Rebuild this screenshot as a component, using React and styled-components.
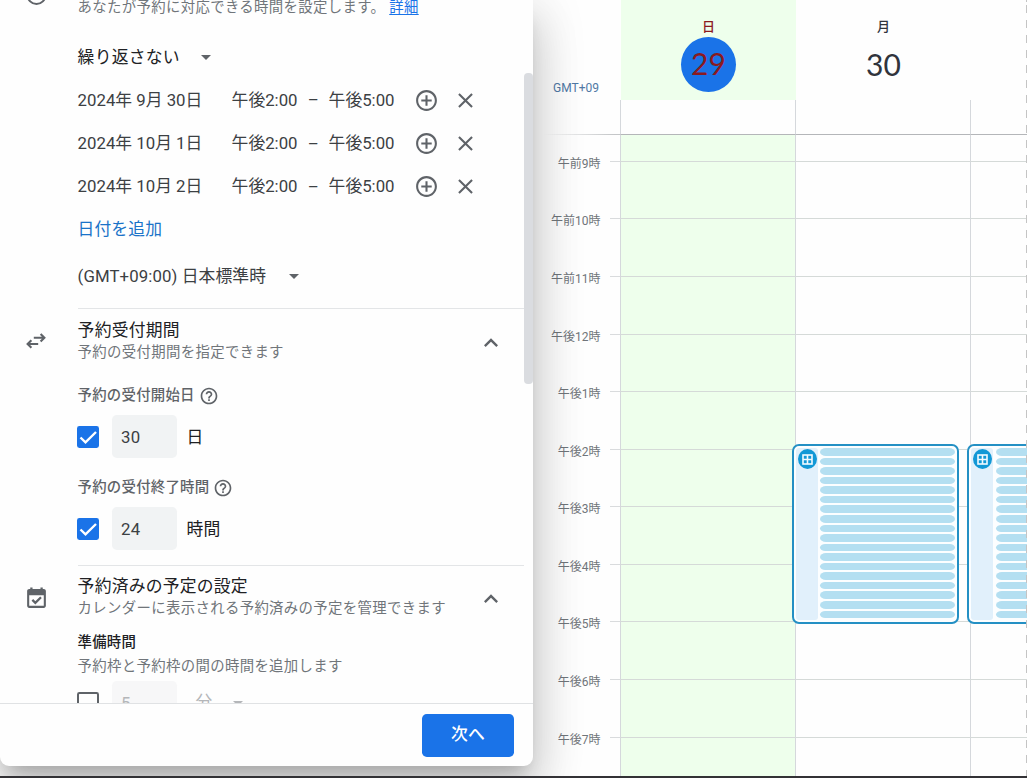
import React from "react";
import styled, { createGlobalStyle, css } from "styled-components";
import {
  MdAddCircleOutline,
  MdArrowDropDown,
  MdClose,
  MdExpandLess,
  MdHelpOutline,
} from "react-icons/md";

const GlobalStyle = createGlobalStyle`
  *, *::before, *::after { box-sizing: border-box; }
  html, body { margin: 0; background: #fff; }
  body {
    font-family: Roboto, "Noto Sans CJK JP", sans-serif;
    color: #3c4043;
    overflow: hidden;
  }
  svg { display: block; flex: none; }
`;

const Screen = styled.div`
  display: flex;
  width: 1027px;
  height: 778px;
  overflow: hidden;
  border-bottom: 2px solid #333236;
  background: #fefefe;
`;

/* ---------- Side panel ---------- */

const Panel = styled.aside`
  position: relative;
  z-index: 2;
  display: flex;
  flex-direction: column;
  flex: none;
  width: 533px;
  height: 766px;
  background: #fefefe;
  border-radius: 0 0 9px 9px;
  box-shadow: 0 29px 46px 4px rgba(0, 0, 0, 0.13),
    0 11px 50px 8px rgba(0, 0, 0, 0.11), 0 13px 18px -8px rgba(0, 0, 0, 0.2);
`;

const PanelBody = styled.div`
  display: flex;
  height: 703px;
  overflow: hidden;
`;

const Sections = styled.div`
  width: 524px;
  height: 703px;
  overflow: hidden;
`;

const ScrollTrack = styled.div`
  width: 9px;
  padding-top: 73px;
`;

const ScrollThumb = styled.div`
  height: 311px;
  border-radius: 4px;
  background: #dadce0;
`;

const Section = styled.section`
  display: grid;
  grid-template-columns: 78px 446px;
`;

const SectionIcon = styled.div`
  display: flex;
  align-items: flex-start;
  padding: ${(p) => p.$top}px 0 0 24px;
  color: #5f6368;
`;

const ClockSlot = styled.div`
  margin-top: -17px;
  padding-left: 24px;
  color: #5f6368;
`;

const SectionContent = styled.div`
  display: flex;
  flex-direction: column;
  text-indent: -0.4px;
  ${(p) =>
    p.$divided &&
    css`
      border-top: 1px solid #e3e5e7;
    `}
`;

const LastContent = styled(SectionContent)`
  margin-top: 15px;
`;

const Hint = styled.p`
  margin: ${(p) => p.$top || 0}px 0 0;
  height: 22px;
  line-height: 22px;
  font-size: 14.4px;
  letter-spacing: 0.34px;
  color: #70757a;
  white-space: nowrap;
`;

const HintLink = styled.a`
  margin-left: 4px;
  color: #1a73e8;
  text-decoration: underline;
  text-underline-offset: 2px;
`;

const Select = styled.div`
  display: flex;
  align-items: center;
  height: ${(p) => p.$height}px;
  margin: ${(p) => p.$top || 0}px 0 ${(p) => p.$bottom || 0}px;
  padding-bottom: 2px;
  gap: ${(p) => p.$gap}px;
  font-size: 16.8px;
  letter-spacing: ${(p) => p.$tracking}px;
  color: ${(p) => (p.$dark ? "#202124" : "#3c4043")};
  svg { margin-top: 2px; color: #5f6368; }
`;

const Slot = styled.div`
  display: grid;
  grid-template-columns: 154px 66px 31px 85px 39px auto;
  align-items: center;
  height: 43.4px;
  font-size: 16.8px;
  color: #3c4043;
  white-space: nowrap;
  svg { margin-top: 1px; color: #5f6368; }
`;

const SlotText = styled.span`
  padding-bottom: 2px;
`;

const Dash = styled.span`
  padding-top: 1px;
  text-align: center;
`;

const AddDate = styled.a`
  height: 43px;
  line-height: 43px;
  font-size: 16.8px;
  letter-spacing: 0.1px;
  color: #1a73c8;
`;

const SectionHead = styled.header`
  display: flex;
  align-items: center;
  justify-content: space-between;
  height: 45px;
  margin-top: ${(p) => p.$top}px;
  padding-right: 19px;
  svg { margin-top: 2px; color: #5f6368; }
`;

const Title = styled.h2`
  margin: 0;
  height: 22px;
  line-height: 22px;
  font-size: 16.8px;
  font-weight: 400;
  letter-spacing: 0.24px;
  color: #202124;
`;

const Label = styled.div`
  display: flex;
  align-items: center;
  gap: 4px;
  height: 22px;
  margin-top: ${(p) => p.$top}px;
  font-size: 14.4px;
  font-weight: 500;
  letter-spacing: 0.24px;
  color: ${(p) => (p.$dark ? "#202124" : "#5f6368")};
  svg { margin-top: 5px; }
`;

const Field = styled.div`
  display: flex;
  align-items: center;
  flex: none;
  height: 43px;
  margin-top: ${(p) => p.$top}px;
  font-size: 16.8px;
  color: ${(p) => (p.$disabled ? "#b4b6b9" : "#202124")};
`;

const Box = styled.span`
  display: flex;
  align-items: center;
  justify-content: center;
  width: 22px;
  height: 22px;
  margin: 0 13px 0 -1px;
  border-radius: 2.4px;
  border: 2px solid ${(p) => (p.$checked ? "#1a73e8" : "#5f6368")};
  background: ${(p) => (p.$checked ? "#1a73e8" : "transparent")};
`;

const NumberInput = styled.span`
  width: 65px;
  height: 43px;
  line-height: 44px;
  padding-left: 9px;
  margin-right: ${(p) => (p.$disabled ? 19 : 10)}px;
  border-radius: 4.8px;
  background: ${(p) => (p.$disabled ? "#f7f7f8" : "#f1f3f4")};
  color: ${(p) => (p.$disabled ? "#b4b6b9" : "#3c4043")};
  letter-spacing: 0.3px;
  text-indent: 0;
`;

const Unit = styled.span`
  padding-bottom: ${(p) => (p.$disabled ? 4 : 2)}px;
`;

const FieldArrow = styled.span`
  margin-left: 14px;
`;

const PanelFooter = styled.footer`
  display: flex;
  justify-content: flex-end;
  height: 63px;
  padding: 10px 19px 0 0;
  border-top: 1px solid #e0e2e4;
`;

const NextButton = styled.button`
  width: 92px;
  height: 43px;
  padding: 0 0 5px;
  border: 0;
  border-radius: 4.8px;
  background: #1a73e8;
  color: #fff;
  font: 500 16.8px Roboto, "Noto Sans CJK JP", sans-serif;
  letter-spacing: 0.3px;
`;

/* ---------- Calendar ---------- */

const columns = "77px 10px 175px 175px 57px";

const Calendar = styled.main`
  position: relative;
  width: 494px;
  height: 776px;
  overflow: hidden;
`;

const DayHeader = styled.div`
  display: grid;
  grid-template-columns: ${columns};
  height: 100px;
`;

const Zone = styled.div`
  grid-column: 1 / 3;
  padding: 80px 21px 0 0;
  text-align: right;
  font-size: 12px;
  line-height: 16px;
  color: #5079a5;
`;

const Day = styled.div`
  display: flex;
  flex-direction: column;
  align-items: center;
  margin-left: 1px;
  margin-right: -1px;
  padding-top: 18px;
  background: ${(p) => (p.$today ? "#eeffec" : "transparent")};
  color: ${(p) => (p.$today ? "#8b1a1f" : "#30343c")};
`;

const Weekday = styled.span`
  height: 19px;
  line-height: 18px;
  font-size: 13px;
  font-weight: 500;
`;

const DayNumber = styled.span`
  width: 55px;
  height: 55px;
  border-radius: 50%;
  background: ${(p) => (p.$today ? "#1a73e8" : "transparent")};
  font-family: Lato, sans-serif;
  font-size: 30px;
  line-height: ${(p) => (p.$today ? 53 : 55)}px;
  text-align: center;
`;

const AllDay = styled.div`
  display: grid;
  grid-template-columns: ${columns};
  height: 35px;
`;

const Cell = styled.div`
  border-left: 1px solid #d5d8dc;
  background: ${(p) => (p.$today ? "#eeffec" : "transparent")};
`;

const AllDayCell = styled(Cell)`
  border-bottom: 1px solid #b4b6b9;
`;

const AllDayGutter = styled.div`
  grid-column: 1 / 3;
  border-bottom: 1px solid;
  border-image: linear-gradient(90deg, transparent 12px, #c4c6c8 80px) 1;
`;

const HourRow = styled.div`
  display: grid;
  grid-template-columns: ${columns};
  height: ${(p) => p.$height}px;
`;

const Line = styled.div`
  border-bottom: 1px solid #d9dbdd;
`;

const LineCell = styled(Cell)`
  border-bottom: 1px solid #d5dad8;
`;

const HourLabel = styled.div`
  display: flex;
  align-items: flex-end;
  justify-content: flex-end;
  padding-right: 9.5px;
  margin-bottom: -10px;
  font-size: 12px;
  line-height: 16px;
  color: #70757a;
  white-space: nowrap;
`;

const DashedEdge = styled.div`
  position: absolute;
  top: 0;
  right: 0;
  width: 1px;
  height: 776px;
  background: repeating-linear-gradient(#c4c4c4 0 8px, transparent 8px 15px);
  background-position: 0 5px;
`;

const Appointment = styled.div`
  position: absolute;
  top: 444px;
  left: ${(p) => p.$left}px;
  display: flex;
  gap: ${(p) => p.$gap}px;
  width: 167px;
  height: 180px;
  padding: 2px;
  border: 2px solid #2490c4;
  border-radius: 7px;
  background: #fcfeff;
`;

const AppointmentRail = styled.div`
  display: flex;
  justify-content: center;
  width: 22px;
  height: 172px;
  padding-top: 1px;
  border-radius: 3px;
  background: #e1f0fb;
`;

const Badge = styled.span`
  display: flex;
  align-items: center;
  justify-content: center;
  flex: none;
  width: 19px;
  height: 20px;
  border-radius: 50%;
  background: #1298d6;
`;

const Slots = styled.div`
  display: flex;
  flex-direction: column;
  gap: 2px;
  flex: 1;
`;

const SlotBar = styled.div`
  flex: none;
  height: 7.57px;
  border-radius: 6px / 4px;
  background: #b4dff1;
`;

const SwapIcon = () => (
  <svg width="24" height="24" viewBox="0 0 24 24" fill="none" stroke="currentColor" strokeWidth="2.1">
    <path d="M9.800 8.800H20M16.600 5l3.800 3.800-3.800 3.800M14.200 15H4M7.400 11.200L3.600 15l3.800 3.800" />
  </svg>
);

const CalendarCheckIcon = () => (
  <svg width="25" height="25" viewBox="0 0 24 24" fill="currentColor">
    <path d="M19 3.800h-1V2.300h-2.200v1.500H8.200V2.300H6v1.500H5c-1.100 0-2 .9-2 2V20c0 1.100.9 2 2 2h14c1.100 0 2-.9 2-2V5.800c0-1.100-.9-2-2-2zM19 20H5V9.800h14V20z" />
    <path d="M8 14.300l2.900 2.900 5.400-5.400" fill="none" stroke="currentColor" strokeWidth="2.200" />
  </svg>
);

const ClockIcon = () => (
  <svg width="24" height="24" viewBox="0 0 24 24" fill="none" stroke="currentColor" strokeWidth="2">
    <circle cx="12.500" cy="12" r="9" />
    <path d="M12.500 6.500V12l4 2.500" />
  </svg>
);

const CheckIcon = () => (
  <svg width="20" height="20" viewBox="0 0 20 20" fill="none" stroke="#fff" strokeWidth="2.400">
    <path d="M2.500 10.500l5 4.800L18 5" />
  </svg>
);

const GridIcon = () => (
  <svg width="11" height="11" viewBox="0 0 11 11" fill="none" stroke="#f2faff" strokeWidth="1.600">
    <rect x="1" y="1" width="9" height="9" />
    <path d="M5.500 1v9M1 5.500h9" />
  </svg>
);

const slotDates = ["2024年 9月 30日", "2024年 10月 1日", "2024年 10月 2日"];

const hours = [
  ["午前9時", 27],
  ["午前10時", 57],
  ["午前11時", 58],
  ["午後12時", 58],
  ["午後1時", 57],
  ["午後2時", 58],
  ["午後3時", 57],
  ["午後4時", 58],
  ["午後5時", 57],
  ["午後6時", 58],
  ["午後7時", 58],
];

const NumberField = ({ top, value, unit, checked }) => (
  <Field $top={top} $disabled={!checked}>
    <Box $checked={checked}>{checked && <CheckIcon />}</Box>
    <NumberInput $disabled={!checked}>{value}</NumberInput>
    <Unit $disabled={!checked}>{unit}</Unit>
    {!checked && (
      <FieldArrow>
        <MdArrowDropDown size={24} />
      </FieldArrow>
    )}
  </Field>
);

const AppointmentBlock = ({ left, gap }) => (
  <Appointment $left={left} $gap={gap}>
    <AppointmentRail>
      <Badge>
        <GridIcon />
      </Badge>
    </AppointmentRail>
    <Slots>
      {Array.from({ length: 18 }, (_, i) => (
        <SlotBar key={i} />
      ))}
    </Slots>
  </Appointment>
);

export default function App() {
  return (
    <>
      <GlobalStyle />
      <Screen>
        <Panel>
          <PanelBody>
            <Sections>
              <Section>
                <ClockSlot>
                  <ClockIcon />
                </ClockSlot>
                <SectionContent>
                  <Hint $top={-3}>
                    あなたが予約に対応できる時間を設定します。<HintLink>詳細</HintLink>
                  </Hint>
                  <Select $top={17} $height={42} $gap={14.4} $tracking={0.24} $dark>
                    繰り返さない
                    <MdArrowDropDown size={24} />
                  </Select>
                  {slotDates.map((date) => (
                    <Slot key={date}>
                      <SlotText>{date}</SlotText>
                      <SlotText>午後2:00</SlotText>
                      <Dash>–</Dash>
                      <SlotText>午後5:00</SlotText>
                      <MdAddCircleOutline size={25} />
                      <MdClose size={25} />
                    </Slot>
                  ))}
                  <AddDate>日付を追加</AddDate>
                  <Select $height={49} $bottom={8} $gap={15.4} $tracking={0.1}>
                    (GMT+09:00) 日本標準時
                    <MdArrowDropDown size={24} />
                  </Select>
                </SectionContent>
              </Section>

              <Section>
                <SectionIcon $top={21}>
                  <SwapIcon />
                </SectionIcon>
                <SectionContent $divided>
                  <SectionHead $top={10}>
                    <div>
                      <Title>予約受付期間</Title>
                      <Hint $top={1}>予約の受付期間を指定できます</Hint>
                    </div>
                    <MdExpandLess size={28} />
                  </SectionHead>
                  <Label $top={18}>
                    予約の受付開始日
                    <MdHelpOutline size={20} />
                  </Label>
                  <NumberField top={11} value="30" unit="日" checked />
                  <Label $top={16}>
                    予約の受付終了時間
                    <MdHelpOutline size={20} />
                  </Label>
                  <NumberField top={11} value="24" unit="時間" checked />
                </SectionContent>
              </Section>

              <Section>
                <SectionIcon $top={35}>
                  <CalendarCheckIcon />
                </SectionIcon>
                <LastContent $divided>
                  <SectionHead $top={9}>
                    <div>
                      <Title>予約済みの予定の設定</Title>
                      <Hint $top={1}>カレンダーに表示される予約済みの予定を管理できます</Hint>
                    </div>
                    <MdExpandLess size={28} />
                  </SectionHead>
                  <Label $top={9} $dark>
                    準備時間
                  </Label>
                  <Hint $top={5}>予約枠と予約枠の間の時間を追加します</Hint>
                  <NumberField top={3} value="5" unit="分" />
                </LastContent>
              </Section>
            </Sections>
            <ScrollTrack>
              <ScrollThumb />
            </ScrollTrack>
          </PanelBody>
          <PanelFooter>
            <NextButton>次へ</NextButton>
          </PanelFooter>
        </Panel>

        <Calendar>
          <DayHeader>
            <Zone>GMT+09</Zone>
            <Day $today>
              <Weekday>日</Weekday>
              <DayNumber $today>29</DayNumber>
            </Day>
            <Day>
              <Weekday>月</Weekday>
              <DayNumber>30</DayNumber>
            </Day>
          </DayHeader>
          <AllDay>
            <AllDayGutter />
            <AllDayCell />
            <AllDayCell />
            <AllDayCell />
          </AllDay>
          {hours.map(([label, height]) => (
            <HourRow key={label} $height={height}>
              <HourLabel>{label}</HourLabel>
              <Line />
              <LineCell $today />
              <LineCell />
              <LineCell />
            </HourRow>
          ))}
          <HourRow $height={58}>
            <span />
            <span />
            <Cell $today />
            <Cell />
            <Cell />
          </HourRow>
          <AppointmentBlock left={259} gap={2} />
          <AppointmentBlock left={434} gap={3} />
          <DashedEdge />
        </Calendar>
      </Screen>
    </>
  );
}
